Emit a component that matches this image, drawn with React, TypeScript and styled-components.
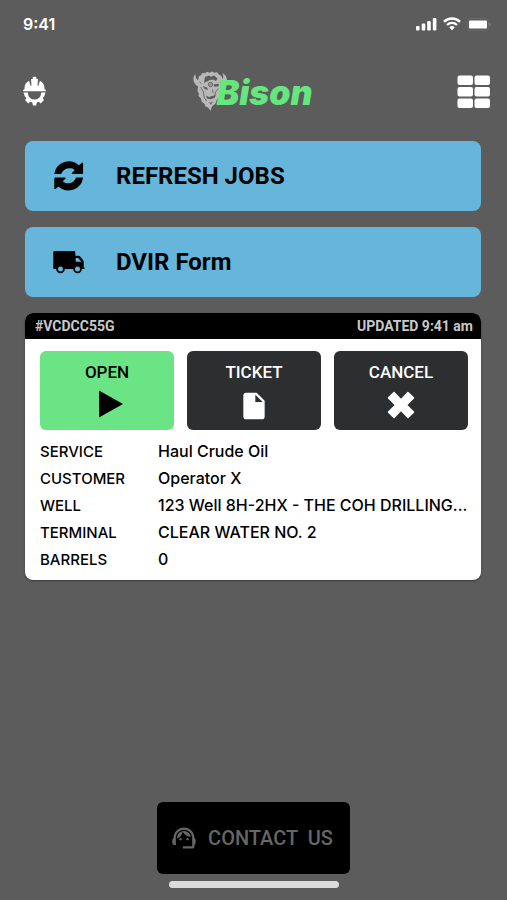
import React from "react";
import styled, { createGlobalStyle } from "styled-components";
import { MdInsertDriveFile, MdSupportAgent } from "react-icons/md";

const GlobalStyle = createGlobalStyle`
  * { box-sizing: border-box; }
  body { margin: 0; background: #5c5c5c; font-family: Roboto, sans-serif; color: #000; }
  button { font: inherit; border: 0; cursor: pointer; }
`;

const Screen = styled.div`
  min-height: 100vh;
  display: flex;
  flex-direction: column;
  background: #5c5c5c;
`;

const StatusBar = styled.div`
  display: flex;
  justify-content: space-between;
  align-items: center;
  height: 48px;
  padding: 0 16px 0 23px;
  color: #fff;
  font: 600 16px/20px Inter, sans-serif;
`;

const StatusIcons = styled.div`
  display: flex;
  align-items: center;
  gap: 6px;
`;

const Header = styled.header`
  display: flex;
  justify-content: space-between;
  align-items: center;
  height: 86px;
  padding: 0 17px 0 20px;
`;

const IconButton = styled.button`
  display: flex;
  padding: 0;
  background: none;
  color: #fff;
`;

const Brand = styled.div`
  display: flex;
  align-items: center;
`;

const BrandName = styled.span`
  margin-left: -11px;
  padding-top: 4px;
  color: #65e67e;
  font: italic 900 34px/40px Inter, sans-serif;
`;

const Main = styled.main`
  flex: 1;
  display: flex;
  flex-direction: column;
  gap: 16px;
  padding: 7px 26px 16px 25px;
`;

const WideButton = styled.button`
  display: flex;
  align-items: center;
  gap: 31px;
  height: 70px;
  padding: 0 28px;
  border-radius: 8px;
  background: #66b5da;
  color: #000;
  font-size: 24px;
  font-weight: 700;
  line-height: 28px;
`;

const Card = styled.section`
  overflow: hidden;
  border-radius: 8px;
  background: #fff;
  box-shadow: 0 1px 2px rgba(0, 0, 0, 0.4);
`;

const CardHeader = styled.div`
  display: flex;
  justify-content: space-between;
  align-items: center;
  height: 26px;
  padding: 0 8px 0 10px;
  background: #000;
  color: #c9c9c9;
  font-size: 14px;
  font-weight: 700;
`;

const Actions = styled.div`
  display: grid;
  grid-template-columns: repeat(3, 1fr);
  gap: 13px;
  padding: 12px 13px 8px 15px;
`;

const ActionButton = styled.button<{ $primary?: boolean }>`
  display: flex;
  flex-direction: column;
  align-items: center;
  gap: 8px;
  height: 79px;
  padding: 11px 0 0;
  border-radius: 6px;
  background: ${(p) => (p.$primary ? "#6ae484" : "#2c2e30")};
  color: ${(p) => (p.$primary ? "#000" : "#fff")};
  font-size: 17px;
  font-weight: 500;
  line-height: 20px;
`;

const Details = styled.dl`
  display: grid;
  grid-template-columns: 118px 1fr;
  margin: 0;
  padding: 0 13px 7px 15px;
  font: 500 16px/27px Inter, sans-serif;
  color: #000;
`;

const Term = styled.dt`
  font-size: 15px;
`;

const Value = styled.dd`
  margin: 0;
  white-space: nowrap;
`;

const Footer = styled.footer`
  display: flex;
  flex-direction: column;
  align-items: center;
  gap: 7px;
  padding-bottom: 12px;
`;

const ContactButton = styled.button`
  display: flex;
  align-items: center;
  gap: 10px;
  height: 72px;
  padding: 0 17px 0 13px;
  border-radius: 6px;
  background: #000;
  color: #666;
  font-size: 20px;
  font-weight: 500;
  white-space: pre;
`;

const HomeIndicator = styled.div`
  width: 170px;
  height: 7px;
  border-radius: 4px;
  background: #dcdcdc;
`;

const SignalIcon = () => (
  <svg width="21" height="14" viewBox="0 0 21 14" fill="currentColor" aria-hidden="true">
    <rect x="0" y="9" width="3.6" height="4.500" rx="1" />
    <rect x="5.700" y="6.600" width="3.600" height="6.900" rx="1" />
    <rect x="11.200" y="4" width="3.600" height="9.500" rx="1" />
    <rect x="16.800" y="1" width="3.600" height="12.500" rx="1" />
  </svg>
);

const WifiIcon = () => (
  <svg width="18" height="14" viewBox="0 0 18 14" fill="none" stroke="currentColor" aria-hidden="true">
    <path d="M1 4.800a11.400 11.400 0 0 1 16 0" strokeWidth="2.400" />
    <path d="M4 8a7 7 0 0 1 10 0" strokeWidth="2.200" />
    <path d="M6.200 10.300a4 4 0 0 1 5.600 0L9 13.200z" fill="currentColor" stroke="none" />
  </svg>
);

const BatteryIcon = () => (
  <svg width="24" height="13" viewBox="0 0 24 13" aria-hidden="true">
    <rect x="0.500" y="0.500" width="21" height="12" rx="3" fill="none" stroke="#686868" />
    <rect x="2" y="2.500" width="18" height="8" rx="1" fill="#fff" />
    <path d="M22.500 4.500c1.400.6 1.400 3.400 0 4z" fill="#888" />
  </svg>
);

const HelmetGearIcon = () => (
  <svg width="29" height="30" viewBox="0 0 29 30" fill="currentColor" aria-hidden="true">
    <path d="M4.500 13.500v-1.200c0-3.800 2-6.300 4.600-7.500l1.500 5h.9L11 3h1.700V1.500q0-.8.8-.8h2q.8 0 .8.800V3H18l-.5 6.800h.9l1.500-5c2.600 1.200 4.600 3.700 4.600 7.500v1.200h.7q.7 0 .7.900t-.7.900H3.800q-.7 0-.7-.9t.7-.9z" />
    <path d="M6.300 17a8.200 8.200 0 0 0 16.400 0" fill="none" stroke="currentColor" strokeWidth="3.200" />
    <path d="M3.500 16.400h4.400v4.200H4.800zM25.500 16.400h-4.400v4.200h3.100zM6.200 21.500l4.200 4-2 2-3.200-3.200zM22.800 21.500l-4.200 4 2 2 3.200-3.200zM11.900 24.800h5.200l-1 4.800h-3.200z" />
  </svg>
);

const GridIcon = () => (
  <svg width="33" height="33" viewBox="0 0 33 33" fill="currentColor" aria-hidden="true">
    {[0, 11.5, 23].map((y) => (
      <React.Fragment key={y}>
        <rect x="0.500" y={y + 0.5} width="15.500" height="9.500" rx="2" />
        <rect x="17.500" y={y + 0.5} width="15.500" height="9.500" rx="2" />
      </React.Fragment>
    ))}
  </svg>
);

const BisonHead = () => (
  <svg width="34" height="40" viewBox="0 0 34 40" aria-hidden="true">
    <path
      fill="#b8b8b8"
      d="M2.500 3C.3 5 -.2 8.500 1.200 11.500c1 2 2.300 3.300 3.800 3.600L4.500 20l1.500 2.500-.5 2.500 2.500 2.500.5 3 3 2.500 1 2.500 2.500 1 2.500 3.200L19 35.500l3.500-3 1.500-4.500 3.500-3.500.5-4 2.500-5c2.500-1 4-4.500 3.200-8C33.200 5 31.500 3 29.500 2c1 2.300 1 4.500 0 6.300L28.500 5 26 3.500 24 1.300l-2.500.5-2.500-1.300L16.500 1.800 14 .8l-2 1.500-3-.3-.8 2L6 5.300l-1 4C3.500 8.300 2 6 2.500 3z"
    />
    <g fill="#5c5c5c">
      <path d="M12 6l4-1.500 2 1.300 3-1.300 3.500 3-1.500 2.500-3-1.500-3 .5-4 2-2 .8z" />
      <path d="M20.500 13.500l5.500-.8-.5 2.500-4 .5zM9.500 15l4.500 1.500 1 2.300-3-.6z" />
      <path d="M13 24.500l3 1.500 4-1.200 3-1-1.500 3-4 1.400-3.500-.7zM15.500 31l2 .8 2.500-1.300-2 3z" />
    </g>
    <g fill="none" stroke="#5c5c5c" strokeWidth=".8">
      <path d="M6.500 11l2 1.500M7.500 16l3 5 .5 5 2.500 4M27 12l1.500-2.500M25.500 17.500l-3 3.500-.5 3M19.500 18.500l.5 3.500" />
      <circle cx="17.500" cy="13.500" r="2.200" fill="#999" />
    </g>
  </svg>
);

const RefreshIcon = () => (
  <svg width="32" height="32" viewBox="0 0 32 32" fill="currentColor" aria-hidden="true">
    <path d="M1.300 14A14.700 14.700 0 0 1 25.800 5.200l3.300-2.500q1-.5 1 .6V13q0 1-1 1H19.400q-1.400 0-.5-1.100L21.700 10A8.600 8.600 0 0 0 8.300 14z" />
    <path d="M30.100 17.500A14.700 14.700 0 0 1 5.600 26.500L2.300 29q-1 .5-1-.6V18.500q0-1 1-1H12q1.400 0 .5 1.100L9.700 21.500A8.600 8.600 0 0 0 23.100 17.500z" />
  </svg>
);

const TruckIcon = () => (
  <svg width="32" height="24" viewBox="0 0 32 24" aria-hidden="true">
    <path d="M1.500 1H21q1.300 0 1.300 1.300v3.400h3.200q1 0 1.800.9l2.800 3.600q.6.8.6 1.800v5.500h.3q.7 0 .7.800t-.7.800H1.500Q.3 19.100.3 17.900V2.300Q.3 1 1.500 1z" />
    <path d="M22.700 8h2.600l3 3.800h-5.600z" fill="#66b5da" />
    <circle cx="7.500" cy="19" r="3.400" fill="#66b5da" stroke="#000" strokeWidth="1.800" />
    <circle cx="24.500" cy="19" r="3.400" fill="#66b5da" stroke="#000" strokeWidth="1.800" />
  </svg>
);

const PlayIcon = () => (
  <svg width="32" height="30" viewBox="0 0 32 30" fill="currentColor" aria-hidden="true">
    <path d="M8 .5l24 13.500L8 27.500z" />
  </svg>
);

const CrossIcon = () => (
  <svg width="30" height="30" viewBox="0 0 30 30" fill="currentColor" aria-hidden="true">
    <path d="M7.500 2q.6-.5 1.100 0L15 8.700 21.400 2q.5-.5 1.100 0L28 7.300q.5.600 0 1.200L21.500 15l6.500 6.500q.5.600 0 1.200L22.500 28q-.6.500-1.100 0L15 21.300 8.600 28q-.5.500-1.100 0L2 22.700q-.5-.6 0-1.200L8.500 15 2 8.500q-.5-.6 0-1.200z" />
  </svg>
);

const details = [
  ["SERVICE", "Haul Crude Oil"],
  ["CUSTOMER", "Operator X"],
  ["WELL", "123 Well 8H-2HX - THE COH DRILLING..."],
  ["TERMINAL", "CLEAR WATER NO. 2"],
  ["BARRELS", "0"],
];

export default function App() {
  return (
    <Screen>
      <GlobalStyle />
      <StatusBar>
        <span>9:41</span>
        <StatusIcons>
          <SignalIcon />
          <WifiIcon />
          <BatteryIcon />
        </StatusIcons>
      </StatusBar>
      <Header>
        <IconButton aria-label="Crew"><HelmetGearIcon /></IconButton>
        <Brand>
          <BisonHead />
          <BrandName>Bison</BrandName>
        </Brand>
        <IconButton aria-label="Menu"><GridIcon /></IconButton>
      </Header>
      <Main>
        <WideButton><RefreshIcon />REFRESH JOBS</WideButton>
        <WideButton><TruckIcon />DVIR Form</WideButton>
        <Card>
          <CardHeader>
            <span>#VCDCC55G</span>
            <span>UPDATED 9:41 am</span>
          </CardHeader>
          <Actions>
            <ActionButton $primary>OPEN<PlayIcon /></ActionButton>
            <ActionButton>TICKET<MdInsertDriveFile size={32} /></ActionButton>
            <ActionButton>CANCEL<CrossIcon /></ActionButton>
          </Actions>
          <Details>
            {details.map(([term, value]) => (
              <React.Fragment key={term}>
                <Term>{term}</Term>
                <Value>{value}</Value>
              </React.Fragment>
            ))}
          </Details>
        </Card>
      </Main>
      <Footer>
        <ContactButton><MdSupportAgent size={28} />{"CONTACT  US"}</ContactButton>
        <HomeIndicator />
      </Footer>
    </Screen>
  );
}
